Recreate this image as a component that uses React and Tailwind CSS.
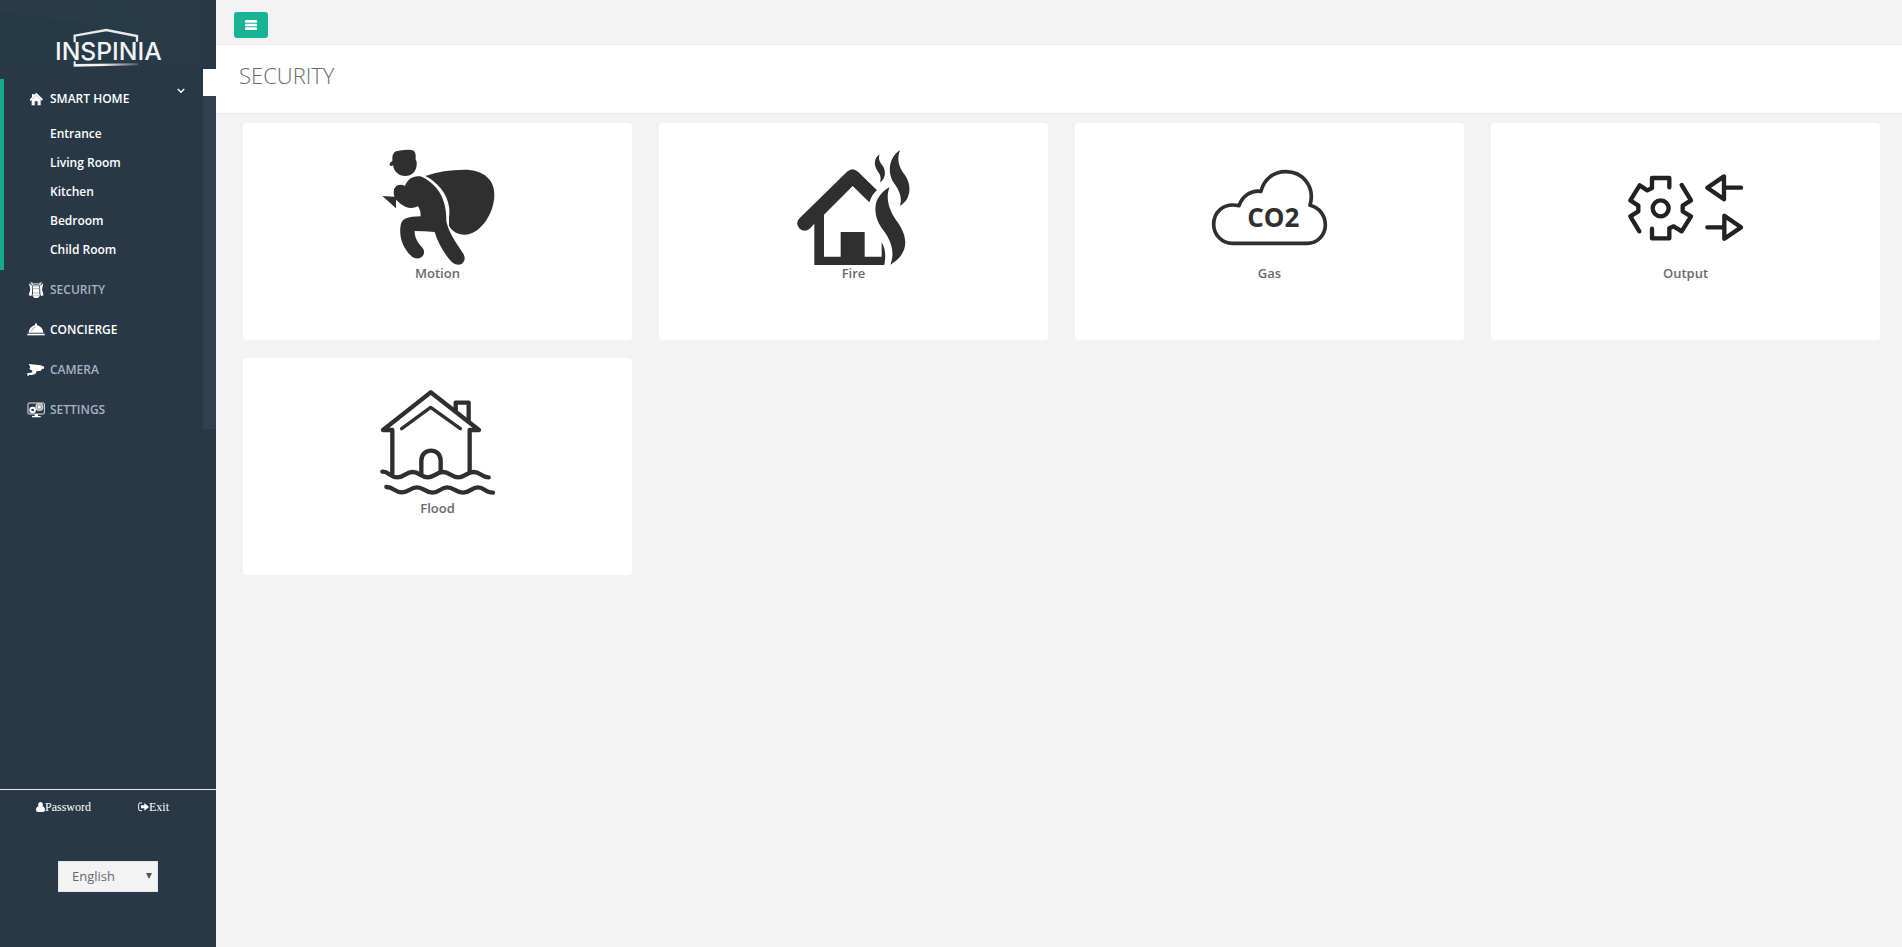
import React from "react";

const ROOMS = ["Entrance", "Living Room", "Kitchen", "Bedroom", "Child Room"];

function Logo() {
  return (
    <svg viewBox="150 75 360 135" className="h-[45px] w-[120px]" role="img" aria-label="Inspinia">
      <defs>
        <linearGradient id="logoBase" x1="0" x2="1" y1="0" y2="0">
          <stop offset="0.45" stopColor="#f3f3f4" />
          <stop offset="1" stopColor="#f3f3f4" stopOpacity="0.2" />
        </linearGradient>
      </defs>
      <path d="M224 127V107L319 90L411 108V125" fill="none" stroke="#e8eaec" strokeWidth="7" />
      <path d="M221 184h6v8L414 190v6L221 200Z" fill="url(#logoBase)" />
      <text x="325" y="180" textAnchor="middle" fill="#f3f3f4" fontFamily="Inter, sans-serif" fontWeight="500" fontSize="74">
        INSPINIA
      </text>
    </svg>
  );
}

function HeaderPattern() {
  return (
    <svg viewBox="0 0 203 63" preserveAspectRatio="none" className="absolute inset-0 -z-10 h-[63px] w-full" aria-hidden="true">
      <rect width="203" height="63" fill="#273a48" />
      <path d="M0 0H112L90 24L0 12Z" fill="#293b49" />
      <path d="M0 12L90 24L60 63H0Z" fill="#263947" />
      <path d="M112 0H203V63H170Z" fill="#283a48" />
    </svg>
  );
}

const iconClass = "h-[18px] w-[18px] shrink-0";

function HomeIcon() {
  return (
    <svg viewBox="0 0 54 54" className={iconClass} fill="#fff" aria-hidden="true">
      <path d="M28 8L48 28L44 32L41 30V46H32V34H24V46H14V30L11 33L8 29L15 21V12H20V16Z" />
      <path d="M23 34V46M32 34V46" stroke="#8b959e" strokeWidth="2" />
      <path d="M14 29L28 16L41 29" stroke="#a5adb5" strokeWidth="2" fill="none" />
    </svg>
  );
}
function AlarmIcon() {
  return (
    <svg viewBox="0 0 54 54" className={iconClass} fill="#fff" aria-hidden="true">
      <path d="M10 2L19 6H36L45 2L40 15H15Z" fill="#c6ccd1" />
      <path d="M18 6L27 12L37 6M15 15L27 8L40 15" fill="none" stroke="#4b5864" strokeWidth="2" />
      <path d="M6 7L16 15L15 38L13 46L5 42L10 26Z" />
      <path d="M49 7L39 15L40 38L42 46L50 42L45 26Z" />
      <path d="M18 16H37V38L39 44H16L18 38Z" />
      <path d="M17 23H38M19 36H36" stroke="#7b8690" strokeWidth="2" />
      <path d="M17 45H38L33 51H22Z" />
    </svg>
  );
}
function BellIcon() {
  return (
    <svg viewBox="0 0 54 54" className={iconClass} fill="#fff" aria-hidden="true">
      <path d="M24 10a3 3 0 0 1 6 0v3C41 15 48 24 49 35H5C6 24 13 15 24 13Z" />
      <path d="M1 38H53V43H1Z" />
      <path d="M13 31Q16 21 25 18" stroke="#697580" strokeWidth="2" fill="none" />
    </svg>
  );
}
function CameraIcon() {
  return (
    <svg viewBox="0 0 54 54" className={iconClass} fill="#fff" aria-hidden="true">
      <path d="M5 9L41 13L52 17L50 24L45 23L42 29L29 31L25 39L14 42L3 41V36L13 35L17 30L7 24L10 18Z" />
      <path d="M1 36H6V44H1Z" />
    </svg>
  );
}
function SettingsIcon() {
  return (
    <svg viewBox="0 0 54 54" className={iconClass} aria-hidden="true">
      <rect x="3" y="6" width="49" height="33" rx="3" fill="none" stroke="#e4e7ea" strokeWidth="3" />
      <circle cx="17" cy="27" r="7" fill="#293846" stroke="#fff" strokeWidth="6" />
      <circle cx="37" cy="18" r="12" fill="#d5d9dd" />
      <circle cx="37" cy="18" r="7" fill="none" stroke="#6f7a85" strokeWidth="2" />
      <circle cx="37" cy="18" r="3" fill="#fff" />
      <path d="M23 39H33V45H41V49H15V45H23Z" fill="#fff" />
    </svg>
  );
}

function Chevron() {
  return (
    <svg viewBox="0 0 8 6" className="h-[6px] w-[8px]" fill="none" stroke="#fff" strokeWidth="1.4" aria-hidden="true">
      <path d="M0.8 1L4 4.2L7.2 1" />
    </svg>
  );
}

const artClass = "h-[116px] w-[120px]";

function MotionArt() {
  return (
    <svg viewBox="54 57 360 348" className={artClass} fill="#2f2f2f" aria-hidden="true">
      <path d="M97 93Q95 70 108 64Q132 58 155 60Q166 62 167 76V89Q171 92 170 104C169 124 155 138 136 138C116 138 101 124 99 105Q96 110 89 106Q87 99 97 93Z" />
      <path d="M196 138Q250 119 312 119C374 119 403 151 403 194C403 253 358 314 314 314C292 314 275 302 267 287V262C274 225 257 170 196 138Z" />
      <path d="M67 198L103 200Q97 178 109 168Q121 161 135 168C142 147 160 136 181 139C229 160 261 203 259 274C267 311 289 339 310 371Q320 390 306 401Q290 409 276 397C250 369 233 336 224 306Q192 303 164 303C163 326 177 341 190 357Q197 374 182 383Q168 389 156 380C129 355 116 321 122 286C125 266 142 260 182 259Q182 240 174 229Q155 238 136 230Q119 221 108 209V235Z" />
    </svg>
  );
}
function FireArt() {
  return (
    <svg viewBox="42 57 360 348" className={artClass} fill="#2f2f2f" aria-hidden="true">
      <path d="M57 266L201 125Q217 110 234 125L291 181Q276 192 268 217L218 168L132 254V380H182V306H254V380H305V337Q321 363 313 405H103V281L89 296Q74 308 59 296Q45 281 57 266Z" />
      <path d="M329 171C315 206 328 240 348 270C391 326 383 374 331 404C345 369 335 334 311 302C280 264 270 204 329 171Z" />
      <path d="M360 60C349 88 357 113 374 134C398 167 391 211 360 227C368 203 357 180 342 159C320 126 328 81 360 60Z" />
      <path d="M299 73C294 86 299 97 307 106C320 124 316 148 300 157C305 143 300 133 293 124C280 104 282 84 299 73Z" />
    </svg>
  );
}
function GasArt() {
  return (
    <svg viewBox="60 57 360 348" className={artClass} aria-hidden="true">
      <path
        d="M147 227C97 217 71 250 71 283C71 315 96 340 127 340H351C382 340 406 315 406 285C406 258 389 233 360 226C376 169 338 125 287 125C250 125 221 149 213 184C184 179 157 198 147 227Z"
        fill="none" stroke="#2f2f2f" strokeWidth="11" strokeLinejoin="round"
      />
      <text x="250" y="291" textAnchor="middle" fill="#2f2f2f" fontFamily="'Open Sans', sans-serif" fontWeight="700" fontSize="78">
        CO2
      </text>
    </svg>
  );
}
function OutputArt() {
  return (
    <svg viewBox="78 57 360 348" className={artClass} fill="none" stroke="#222" strokeWidth="13" strokeLinecap="round" strokeLinejoin="round" aria-hidden="true">
      <path d="M208 172V144H156V174L142 181L119 166L91 211L115 227V244L91 259L118 304" />
      <path d="M156 296V325H208V295L221 289L245 304L273 259L248 244V227L273 211L245 165" />
      <circle cx="182" cy="235" r="24" />
      <path d="M423 173H374M372 139L322 173L372 208Z" />
      <path d="M322 292H372M373 257L423 292L373 326Z" />
    </svg>
  );
}
function FloodArt() {
  return (
    <svg viewBox="54 42 360 348" className={artClass} fill="none" stroke="#2f2f2f" strokeWidth="13" strokeLinecap="round" strokeLinejoin="round" aria-hidden="true">
      <path d="M97 311V180H69L212 67L357 180H329V303" />
      <path d="M125 176L212 112L301 176" strokeWidth="10" />
      <path d="M287 121V98H326V151" />
      <path d="M184 314V272C184 232 242 232 242 272V304" />
      <path d="M67 305C88 304 90 322 112 322S137 306 158 306S182 322 203 322S229 306 249 306S274 322 295 322S320 306 341 306S363 322 386 322" />
      <path d="M79 351C101 351 104 367 125 367S151 352 171 352S196 368 217 368S242 352 262 352S287 368 309 368S334 352 354 352S376 369 399 368" />
    </svg>
  );
}

const CARDS = [
  { label: "Motion", Art: MotionArt },
  { label: "Fire", Art: FireArt },
  { label: "Gas", Art: GasArt },
  { label: "Output", Art: OutputArt },
  { label: "Flood", Art: FloodArt },
];

function MenuLink({ icon, label, active }) {
  return (
    <li>
      <a
        href="#"
        className={
          "flex h-10 items-center gap-[5px] pl-[27px] text-[12px] font-semibold " +
          (active ? "text-white" : "text-[#a7b1c2]")
        }
      >
        {icon}
        {label}
      </a>
    </li>
  );
}

function Sidebar() {
  return (
    <aside className="flex w-[216px] shrink-0 flex-col bg-[#293846]">
      <div className="flex">
        <nav className="min-w-0 flex-1" aria-label="Main">
          <div className="relative isolate flex h-[79px] pl-[50px] pt-[25px]">
            <HeaderPattern />
            <Logo />
          </div>
          <ul>
            <li className="border-l-4 border-[#19aa8d] pb-[6px]">
              <a href="#" className="flex h-10 items-center gap-[5px] pl-[23px] pr-[18px] text-[12px] font-semibold text-white">
                <HomeIcon />
                <span className="flex-1">SMART HOME</span>
                <span className="self-start pt-[9px]"><Chevron /></span>
              </a>
              <ul>
                {ROOMS.map((room) => (
                  <li key={room}>
                    <a href="#" className="flex h-[29px] items-center pl-[46px] text-[12px] font-semibold text-white">
                      {room}
                    </a>
                  </li>
                ))}
              </ul>
            </li>
            <MenuLink icon={<AlarmIcon />} label="SECURITY" />
            <MenuLink icon={<BellIcon />} label="CONCIERGE" active />
            <MenuLink icon={<CameraIcon />} label="CAMERA" />
            <MenuLink icon={<SettingsIcon />} label="SETTINGS" />
          </ul>
        </nav>
        <div className="flex w-[13px] flex-col pt-[69px]">
          <div className="h-[27px] bg-white" />
          <div className="h-[333px] bg-[#2f4050]" />
        </div>
      </div>

      <div className="mt-auto border-t border-[#e7eaec] pb-[55px]">
        <div className="flex gap-[47px] pl-9 pt-[9px] font-['Liberation_Serif',serif] text-[12px] leading-4 text-white">
          <a href="#" className="flex items-center">
            <svg viewBox="0 0 27 30" className="h-[10px] w-[9px]" fill="#fff" aria-hidden="true">
              <ellipse cx="13.5" cy="8" rx="7" ry="8" />
              <path d="M7 13C2 15 0 19 0 24Q0 30 6 30H21Q27 30 27 24C27 19 25 15 20 13Q13 19 7 13Z" />
            </svg>
            Password
          </a>
          <a href="#" className="flex items-center">
            <svg viewBox="0 0 33 30" className="h-[10px] w-[11px]" fill="#fff" aria-hidden="true">
              <path d="M12 3H6Q2 3 2 7V22Q2 26 6 26H12" fill="none" stroke="#fff" strokeWidth="3" />
              <path d="M9 10H19V3L33 15L19 26V19H9Z" />
            </svg>
            Exit
          </a>
        </div>
        <div className="relative ml-[58px] mt-[46px] w-[100px]">
          <select
            aria-label="Language"
            className="block h-[31px] w-full appearance-none border border-[#e5e6e7] bg-[#f3f3f4] pl-[13px] text-[13px] text-[#676a6c]"
          >
            <option>English</option>
          </select>
          <svg viewBox="0 0 6 6" className="pointer-events-none absolute right-[6px] top-3 h-[6px] w-[6px]" fill="#555" aria-hidden="true">
            <path d="M0 0H6L3 6Z" />
          </svg>
        </div>
      </div>
    </aside>
  );
}

export default function App() {
  return (
    <div className="flex min-h-screen bg-[#f3f3f3] font-['Open_Sans',sans-serif] text-[#676a6c]">
      <Sidebar />
      <div className="min-w-0 flex-1">
        <div className="flex h-[45px] items-start border-b border-[#e7eaec] pl-[18px] pt-3">
          <button
            type="button"
            aria-label="Toggle menu"
            className="flex h-[26px] w-[34px] items-center justify-center rounded-[3px] bg-[#1ab394]"
          >
            <svg viewBox="0 0 36 30" className="h-[10px] w-[12px]" fill="#fff" aria-hidden="true">
              <rect y="0" width="36" height="8" rx="2" />
              <rect y="11" width="36" height="8" rx="2" />
              <rect y="22" width="36" height="8" rx="2" />
            </svg>
          </button>
        </div>
        <header className="h-[69px] border-b border-[#e7eaec] bg-white pl-[23px] pt-[14px]">
          <h1 className="text-[22px] font-light leading-8">SECURITY</h1>
        </header>
        <main className="grid grid-cols-4 gap-x-[27px] gap-y-[18px] pb-6 pl-[27px] pr-[22px] pt-[9px]">
          {CARDS.map(({ label, Art }) => (
            <a
              key={label}
              href="#"
              className="flex h-[217px] flex-col items-center rounded-[4px] bg-white pt-[26px] text-[13px] font-semibold leading-4"
            >
              <Art />
              {label}
            </a>
          ))}
        </main>
      </div>
    </div>
  );
}
